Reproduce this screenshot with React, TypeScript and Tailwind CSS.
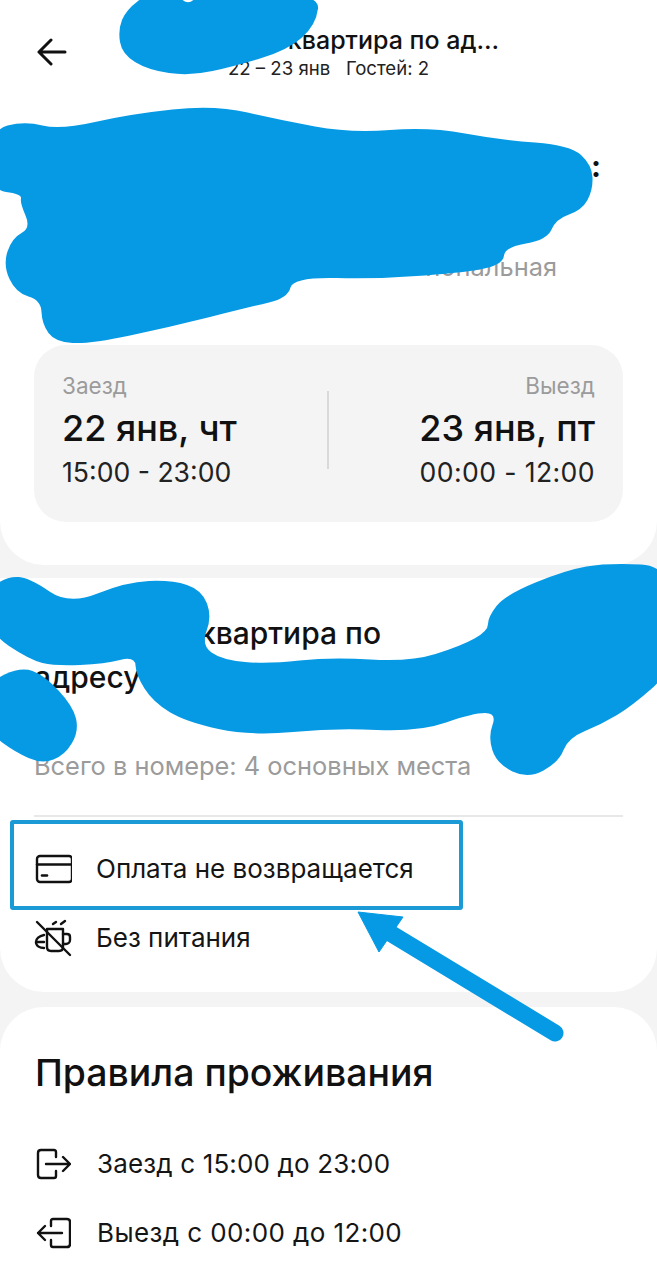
import React from "react";

type P = [number, number];

function smooth(pts: P[]): string {
  const n = pts.length;
  const mid = (a: P, b: P): P => [(a[0] + b[0]) / 2, (a[1] + b[1]) / 2];
  const s = mid(pts[n - 1], pts[0]);
  let d = `M${s[0]} ${s[1]}`;
  for (let i = 0; i < n; i++) {
    const m = mid(pts[i], pts[(i + 1) % n]);
    d += ` Q${pts[i][0]} ${pts[i][1]} ${m[0]} ${m[1]}`;
  }
  return d + "Z";
}

const blobHeader: P[] = [
  [150, -8], [176, -6], [188, 5], [200, -6], [320, -8], [316, 25], [288, 50], [235, 66], [190, 76], [148, 70], [122, 54], [118, 30], [126, 10],
];
const blobTop: P[] = [
  [-10, 130], [25, 121], [60, 130], [130, 114], [215, 105], [280, 120], [350, 133], [430, 127], [500, 140], [570, 145], [592, 165], [593, 190], [582, 210], [556, 219], [547, 240], [505, 247], [503, 264], [470, 272], [380, 279], [293, 277], [288, 298], [250, 307], [170, 327], [90, 344], [55, 342], [42, 324], [41, 300], [16, 293], [3, 265], [12, 238], [31, 228], [20, 203], [22, 194], [-10, 190],
];
const blobMiddle: P[] = [
  [-12, 590], [8, 576], [30, 578], [69, 605], [126, 582], [172, 580], [202, 590], [212, 617], [201, 645], [222, 660], [268, 664], [331, 657], [410, 662], [461, 646], [488, 631], [488, 617], [505, 595], [566, 570], [607, 563], [675, 566], [675, 668], [632, 706], [602, 724], [568, 738], [559, 762], [528, 779], [497, 764], [488, 737], [497, 713], [473, 713], [419, 732], [335, 728], [251, 736], [186, 722], [153, 702], [136, 675], [135, 656], [105, 664], [55, 666], [30, 660], [-12, 632],
];
const blobLeft: P[] = [
  [-12, 682], [21, 667], [44, 675], [73, 706], [79, 731], [65, 755], [42, 764], [15, 752], [-12, 732],
];

function Scribbles() {
  return (
    <svg className="absolute left-0 top-0 pointer-events-none" width="657" height="1280" viewBox="0 0 657 1280" fill="#069ae5">
      <path d={smooth(blobHeader)} />
      <path d={smooth(blobTop)} />
      <path d={smooth(blobMiddle)} />
      <path d={smooth(blobLeft)} />
      <path d="M390 933L555 1033" stroke="#069ae5" strokeWidth="17" strokeLinecap="round" fill="none" />
      <path d="M358 912L403 917L379 952Z" stroke="#069ae5" strokeWidth="1" strokeLinejoin="round" />
    </svg>
  );
}

const BackArrow = () => (
  <svg width="30" height="28" viewBox="0 0 30 28" fill="none" stroke="#111" strokeWidth="3" strokeLinecap="round" strokeLinejoin="round">
    <path d="M2 14H28M14 2L2 14L14 26" />
  </svg>
);

const CardIcon = () => (
  <svg width="38" height="30" viewBox="0 0 38 30" fill="none" stroke="#111" strokeWidth="2.4" strokeLinecap="round" strokeLinejoin="round">
    <rect x="3" y="2" width="35" height="26" rx="3" />
    <path d="M3 10.5H38" />
    <path d="M8 21.5H13" strokeWidth="2.6" />
  </svg>
);

const NoFoodIcon = () => (
  <svg width="38" height="38" viewBox="0 0 38 38" fill="none" stroke="#111" strokeWidth="2.4" strokeLinecap="round" strokeLinejoin="round">
    <path d="M3 3L36 36" />
    <path d="M13 10V28C13 30.5 14.5 32 17 32H25C27.5 32 29 30.5 29 28V10H13" />
    <path d="M29 15H33C35 15 36 16 36 18V21C36 23.5 34 25 32 25H29" />
    <path d="M10 16C5 17 2 20 2 23C2 27 6 29 10 29" />
    <path d="M2 23H10" />
    <path d="M19 5L22 3M27 5L31 2" />
  </svg>
);

const ExitIcon = () => (
  <svg width="36" height="32" viewBox="0 0 36 32" fill="none" stroke="#111" strokeWidth="2.4" strokeLinecap="round" strokeLinejoin="round">
    <path d="M21 9V4C21 2.5 20 2 19 2H6C4 2 3 3 3 5V27C3 29 4 30 6 30H19C20 30 21 29.5 21 28V23" />
    <path d="M11 16H35M28 9L35 16L28 23" />
  </svg>
);

const EnterIcon = () => (
  <svg width="36" height="32" viewBox="0 0 36 32" fill="none" stroke="#111" strokeWidth="2.4" strokeLinecap="round" strokeLinejoin="round">
    <path d="M16 9V4C16 2.5 17 2 18 2H32C34 2 35 3 35 5V27C35 29 34 30 32 30H18C17 30 16 29.5 16 28V23" />
    <path d="M27 16H3M10 9L3 16L10 23" />
  </svg>
);

function Row({ icon, text, className, textClass }: { icon: React.ReactNode; text: string; className?: string; textClass?: string }) {
  return (
    <div className={`flex items-center ${className ?? ""}`}>
      <div className="w-[62px] flex items-center">{icon}</div>
      <span className={`text-[26px] leading-[34px] text-[#151515] whitespace-nowrap ${textClass ?? ""}`}>{text}</span>
    </div>
  );
}

export default function App() {
  return (
    <div
      className="relative w-[657px] h-[1280px] overflow-hidden bg-[#f4f4f4]"
      style={{ fontFamily: 'Inter, "Noto Sans", sans-serif' }}
    >
      {/* top card */}
      <section className="h-[565px] bg-white rounded-b-[44px] px-[34px]">
        <header className="relative h-[96px]">
          <div className="absolute left-[3px] top-[38px]"><BackArrow /></div>
          <div className="pt-[24px] flex flex-col items-center">
            <div className="pl-[130px] text-[25px] leading-[32px] font-medium text-[#111] whitespace-nowrap">квартира по ад...</div>
            <div className="text-[18.6px] leading-[24px] text-[#222] whitespace-nowrap">22 – 23 янв&nbsp;&nbsp; Гостей: 2</div>
          </div>
        </header>
        <div className="h-[249px] relative">
          <div className="absolute right-[22px] top-[50px] text-[30px] font-bold leading-[40px] text-[#111]">:</div>
          <div className="absolute right-[66px] top-[155px] text-[25.4px] leading-[32px] text-[#9b9b9b]">иональная</div>
        </div>
        <div className="w-[589px] h-[177px] rounded-[32px] bg-[#f4f4f4] px-[28px] pt-[25px] flex justify-between relative">
          <div>
            <div className="text-[22.5px] leading-[32px] text-[#9b9b9b]">Заезд</div>
            <div className="mt-[2px] text-[36px] leading-[48px] font-medium text-[#111]">22 янв, чт</div>
            <div className="mt-[2px] text-[26.6px] leading-[36px] text-[#222]">15:00 - 23:00</div>
          </div>
          <div className="self-start mt-[21px] w-[2px] h-[78px] bg-[#d9d9d9]" />
          <div className="text-right">
            <div className="text-[22.5px] leading-[32px] text-[#9b9b9b]">Выезд</div>
            <div className="mt-[2px] text-[36px] leading-[48px] font-medium text-[#111]">23 янв, пт</div>
            <div className="mt-[2px] text-[26.6px] leading-[36px] text-[#222] tracking-[0.4px]">00:00 - 12:00</div>
          </div>
        </div>
      </section>

      {/* room card */}
      <section className="mt-[13px] h-[414px] bg-white rounded-b-[44px] px-[34px] pt-[33px]">
        <h2 className="text-[30px] leading-[44px] font-medium text-[#111]">
          <span className="pl-[165px]">квартира по</span>
          <br />
          адресу
        </h2>
        <div className="mt-[50px] text-[25.4px] leading-[34px] text-[#9b9b9b] whitespace-nowrap">Всего в номере: 4 основных места</div>
        <div className="mt-[32px] h-[2px] bg-[#e8e8e8]" />
        <Row className="mt-[35px]" icon={<CardIcon />} text="Оплата не возвращается" />
        <Row className="mt-[33px]" icon={<NoFoodIcon />} text="Без питания" />
      </section>

      {/* rules card */}
      <section className="mt-[15px] h-[273px] bg-white rounded-t-[44px] px-[35px] pt-[40px]">
        <h2 className="text-[37.4px] leading-[52px] font-medium text-[#111] whitespace-nowrap">Правила проживания</h2>
        <Row className="mt-[48px]" icon={<ExitIcon />} text="Заезд с 15:00 до 23:00" textClass="tracking-[0.15px]" />
        <Row className="mt-[35px]" icon={<EnterIcon />} text="Выезд с 00:00 до 12:00" textClass="tracking-[0.4px]" />
      </section>

      {/* highlight drawn over the screenshot */}
      <div className="absolute left-[10px] top-[820px] w-[453px] h-[90px] border-[4px] border-[#1b9ad6] rounded-[3px]" />
      <Scribbles />
    </div>
  );
}
